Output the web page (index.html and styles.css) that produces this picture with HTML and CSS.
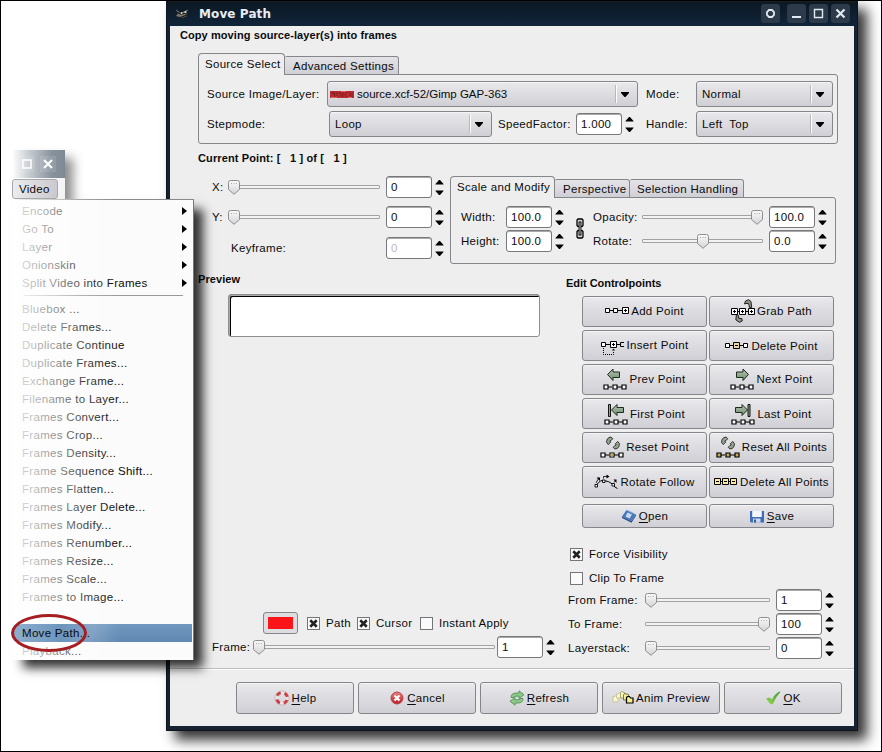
FILE: index.html
```html
<!DOCTYPE html>
<html lang="en">
<head>
<meta charset="utf-8">
<title>Move Path</title>
<link rel="stylesheet" href="styles.css">
</head>
<body>
<svg class="defs" width="0" height="0" aria-hidden="true">
  <defs>
    <linearGradient id="gArrow" x1="0" y1="0" x2="0" y2="1"><stop offset="0" stop-color="#b4c4b0"/><stop offset="1" stop-color="#6f8a70"/></linearGradient>
    <linearGradient id="gThumb" x1="0" y1="0" x2="0" y2="1"><stop offset="0" stop-color="#fafafa"/><stop offset="1" stop-color="#d4d4d6"/></linearGradient>
    <linearGradient id="gRed" x1="0" y1="0" x2="0" y2="1"><stop offset="0" stop-color="#ee7d7d"/><stop offset="1" stop-color="#bb1e26"/></linearGradient>
    <linearGradient id="gGreen" x1="0" y1="1" x2="1" y2="0"><stop offset="0" stop-color="#9fd75c"/><stop offset="1" stop-color="#3c9a22"/></linearGradient>
    <symbol id="thumb" viewBox="0 0 12 15"><path d="M2.500.5h7q2 0 2 2v7L6 14.300.5 9.500v-7q0-2 2-2z" fill="url(#gThumb)" stroke="#8e8e92"/><path d="M3 3.500h1M5.500 3.500h1M8 3.500h1" stroke="#aaa"/></symbol>
    <symbol id="spin" viewBox="0 0 9 15"><path d="M4 0h1l3.500 4v.5H.5V4zM4 15h1l3.500-4v-.5H.5v.5z" fill="#000"/></symbol>
    <symbol id="down" viewBox="0 0 8 5"><path d="M0 0h8v1L4.500 5h-1L0 1z" fill="#000"/></symbol>
    <symbol id="chain" viewBox="0 0 8 21"><path d="M1 2l1-1h4l1 1v5.500l-1 1H2l-1-1zM1 13.500l1-1h4l1 1V19l-1 1H2l-1-1z" fill="#d5d5d5" stroke="#000" stroke-width="1.300"/><path d="M4 3.500v14" stroke="#000" stroke-width="2.800"/><path d="M4 4.500v12" stroke="#ccc"/></symbol>
    <symbol id="check" viewBox="0 0 14 14"><path d="M3.500 3.500l7 7M10.500 3.500l-7 7" stroke="#222" stroke-width="2.800"/></symbol>
    <symbol id="row3" viewBox="0 0 24 6"><path d="M5 3h4M14 3h5" stroke="#000"/><path d="M1 1h4v4H1zM10 1h4v4h-4zM19 1h4v4h-4z" fill="#fff" stroke="#000" stroke-width="1.200"/></symbol>
    <symbol id="row3y" viewBox="0 0 24 6"><path d="M5 3h4M14 3h5" stroke="#000"/><path d="M1 1h4v4H1zM10 1h4v4h-4zM19 1h4v4h-4z" fill="#c2ab5e" stroke="#000" stroke-width="1.200"/></symbol>
    <symbol id="i-add" viewBox="0 0 24 24"><path d="M5 11.500h4M13 11.500h5" stroke="#000"/><path d="M.5 9.500h4v4h-4zM8.500 9.500h4v4h-4zM17.500 8.500h6v6h-6z" fill="#fff" stroke="#000"/><path d="M19 11.500h3M20.500 10v3" stroke="#000"/></symbol>
    <symbol id="i-grab" viewBox="0 0 24 24"><path d="M6 12.500h3M15 12.500h3" stroke="#000"/><path d="M13.500 5l1-3 3-1.300 2.500 1.800.7 6-2 .3L17.500 4.500 15 4.500zM5.500 15l1.800 1.300.5 3 3 .2.500 2.500-3 1.300-3.500-2.500z" fill="#8a9484" stroke="#111" stroke-width=".9"/><path d="M.5 9.500h6v6h-6zM8.500 9.500h6v6h-6zM17.500 9.500h6v6h-6z" fill="#fff" stroke="#000"/><path d="M2 12.500h3M3.500 11v3M10 12.500h3M11.500 11v3M19 12.500h3M20.500 11v3" stroke="#000"/></symbol>
    <symbol id="i-insert" viewBox="0 0 24 24"><path d="M5 11.500h4M15 11.500h4" stroke="#000"/><path d="M.5 9.500h4v4h-4zM9.500 8.500h6v6h-6z" fill="#fff" stroke="#000"/><path d="M23 9.500h-3.500v4H23" fill="none" stroke="#000"/><path d="M11 11.500h3M12.500 10v3" stroke="#000"/><path d="M2.500 15v6.500h10V18" fill="none" stroke="#000" stroke-dasharray="1 1"/><path d="M11 17.500l1.500-2 1.500 2z"/></symbol>
    <symbol id="i-delete" viewBox="0 0 24 24"><path d="M5 11.500h4M15 11.500h4" stroke="#000"/><path d="M.5 9.500h4v4h-4zM18.500 9.500h4v4h-4z" fill="#fff" stroke="#000"/><path d="M8.500 8.500h6v6h-6z" fill="#e8da9c" stroke="#000"/><path d="M10 11.500h3" stroke="#000"/></symbol>
    <symbol id="i-prev" viewBox="0 0 24 24"><path d="M4.500 7.500L10 2v3h6.500v5.500H10v3z" fill="url(#gArrow)" stroke="#1d2b1d"/><use href="#row3" x="0" y="17" width="24" height="6"/></symbol>
    <symbol id="i-next" viewBox="0 0 24 24"><path d="M18.500 7.500L13 2v3H6.500v5.500H13v3z" fill="url(#gArrow)" stroke="#1d2b1d"/><use href="#row3" x="0" y="17" width="24" height="6"/></symbol>
    <symbol id="i-first" viewBox="0 0 24 24"><path d="M7.500 8L13 2.500v3h6.500v5H13v3z" fill="url(#gArrow)" stroke="#1d2b1d"/><path d="M4.500 2.500h2v12h-2z" fill="#91a58f" stroke="#111"/><use href="#row3" x="0" y="17" width="24" height="6"/></symbol>
    <symbol id="i-last" viewBox="0 0 24 24"><path d="M16.500 8L11 2.500v3H4.500v5H11v3z" fill="url(#gArrow)" stroke="#1d2b1d"/><path d="M17 2.500h2v12h-2z" fill="#91a58f" stroke="#111"/><use href="#row3" x="0" y="17" width="24" height="6"/></symbol>
    <symbol id="recycle" viewBox="0 0 14 14"><path d="M.6 6.500Q.4 1.500 5 1l1.800 1.700L5 4.600 3.800 5l.8 1.300L2.300 8.600z" fill="#93a58f" stroke="#111" stroke-width=".8"/><path d="M13.400 7.500q.2 5-4.400 5.500L7.200 11.300 9 9.400l1.200-.4-.8-1.300 2.300-2.300z" fill="#93a58f" stroke="#111" stroke-width=".8"/></symbol>
    <symbol id="i-reset" viewBox="0 0 24 24"><use href="#recycle" x="6" y="1" width="14" height="14"/><use href="#row3" x="0" y="17" width="24" height="6"/><path d="M10.600 18.600h2.800v2.800h-2.800z" fill="#c2ab5e"/></symbol>
    <symbol id="i-resetall" viewBox="0 0 24 24"><use href="#recycle" x="5" y="1" width="14" height="14"/><use href="#row3y" x="0" y="17" width="24" height="6"/></symbol>
    <symbol id="i-rotate" viewBox="0 0 24 24"><path d="M2.500 15q4-5.500 7.500-4.500 5 .5 9 4 1.500 3 4.500 4" fill="none" stroke="#000"/><path d="M1 14.500h2.500V17H1zM8.500 10H11v2.500H8.500zM18 13.500h2.500V16H18z" fill="#fff" stroke="#000" stroke-width=".9"/><path d="M2 13L4.500 8.500M9.500 8.500V6.500h4M20 12.500l1.500-2" fill="none" stroke="#000" stroke-width=".8"/><path d="M2.500 7.500h3.500V11zM12.500 4.500l3 2-3 2zM19.500 9.500h3V13z" fill="#000"/></symbol>
    <symbol id="i-delall" viewBox="0 0 24 24"><path d="M.5 8.500h6v6h-6zM8.500 8.500h6v6h-6zM16.500 8.500h6v6h-6z" fill="#ffe7a0" stroke="#000"/><path d="M2 11.500h3M10 11.500h3M18 11.500h3M6.500 11.500h2M14.500 11.500h2" stroke="#000"/></symbol>
    <symbol id="i-open" viewBox="0 0 16 16"><path d="M5.500 2L15 6.500 10.500 13 1 8.500z" fill="#4a78bd"/><path d="M1 8.500l9.500 4.500L15 6.500v1.300l-4.500 7L1 10z" fill="#27518f"/><path d="M6.500 4.500l4.500 2-2.500 4-4-2z" fill="#c8daf2"/><path d="M7.500 3l4.500 2" stroke="#89aee2"/></symbol>
    <symbol id="i-save" viewBox="0 0 16 16"><path d="M1 3h14v11.500H2L1 13.500z" fill="#3f6cb4"/><path d="M3.200 3h9.600v6H3.200z" fill="#f2f6fc"/><path d="M4 10.500h7.500v4H4z" fill="#c9d8ee"/><path d="M5 11.500h2v3H5z" fill="#3d5d8c"/></symbol>
    <symbol id="i-help" viewBox="0 0 16 16"><circle cx="8" cy="8" r="5.500" fill="none" stroke="#ebe4e4" stroke-width="3"/><circle cx="8" cy="8" r="5.500" fill="none" stroke="#cb3f47" stroke-width="3" stroke-dasharray="4.600 4.040" stroke-dashoffset="-2"/><circle cx="8" cy="8" r="7.100" fill="none" stroke="#c8a0a0" stroke-width=".6"/></symbol>
    <symbol id="i-cancel" viewBox="0 0 16 16"><circle cx="8" cy="8" r="6" fill="url(#gRed)" stroke="#b3434a"/><path d="M5.500 5.500l5 5M10.500 5.500l-5 5" stroke="#fff" stroke-width="2.200"/></symbol>
    <symbol id="i-refresh" viewBox="0 0 16 16"><path d="M2 7.500q0-4.500 5-4.500h3V.8l5 4-5 3.700V6.200H7q-2 0-2 1.300z" fill="#8cc887" stroke="#478c49" stroke-width=".8"/><path d="M14 8.500q0 4.500-5 4.500H6v2.200l-5-4 5-3.700v2.300h3q2 0 2-1.300z" fill="#8cc887" stroke="#478c49" stroke-width=".8"/></symbol>
    <symbol id="i-anim" viewBox="0 0 22 16"><g fill="#fbf8d0" stroke="#c9c69a"><path d="M1 6.500h2l1-1.500 2 1.500V12H1z"/><path d="M4.500 4h2l1-1.500 2 1V8h-5z"/></g><path d="M8.500 2.500l1-1 3 1V8h-4z" fill="#f8f5b8" stroke="#a5a26e"/><path d="M11.500 5l1-1.500 4 1V10h-5z" fill="#f3ee9a" stroke="#77744a"/><path d="M14.500 7.500l1-1h2l1 1.500h2.500V13h-6.500z" fill="#f4ef8b" stroke="#000" stroke-width="1.200"/></symbol>
    <symbol id="i-ok" viewBox="0 0 16 16"><path d="M1 8.500l3.500-1L7 9.500Q9 4.500 14.500 1.500l.8.500Q11 6.500 8 13.800q-1.500 1-3 0z" fill="url(#gGreen)"/></symbol>
    <symbol id="wilber" viewBox="0 0 16 12"><path d="M1 1l5 4 4-2 4-2-2 4 1 3-5 2-4-1-3-1 2-2z" fill="#7e776c"/><path d="M2 4l4 2 6-1M5 10l8-3" stroke="#1c1c1c" stroke-width="1.300" fill="none"/><circle cx="7" cy="5" r="1" fill="#eee"/><circle cx="11" cy="4" r="1" fill="#ddd"/></symbol>
    <symbol id="thumbnail" viewBox="0 0 24 9"><path d="M0 1h24v7H0z" fill="#bb2a2e"/><path d="M1 2l2 2 1-2 1 5M7 2v4M9 3h2v4M13 2v5M16 2l-1 3 2 2M20 2v4M22 3v4" stroke="#7a2322" fill="none"/><path d="M1 7.500h6M11 1.500h5M18 7.500h4" stroke="#e06663"/></symbol>
  </defs>
</svg>

<main class="desktop">
  <section class="window">
    <header class="titlebar">
      <svg class="wilber"><use href="#wilber"/></svg>
      <h1>Move Path</h1>
      <span class="winbtn shade"><svg viewBox="0 0 19 19"><path d="M8 6h3l2 2v3l-2 2H8l-2-2V8z" fill="none" stroke="#dfe9f2" stroke-width="1.800"/></svg></span>
      <span class="winbtn"><svg viewBox="0 0 19 19"><path d="M5 13h9" stroke="#dfe9f2" stroke-width="2"/></svg></span>
      <span class="winbtn"><svg viewBox="0 0 19 19"><path d="M5.500 5.500h8v8h-8z" fill="none" stroke="#dfe9f2" stroke-width="1.400"/></svg></span>
      <span class="winbtn"><svg viewBox="0 0 19 19"><path d="M5.500 5.500l8 8M13.500 5.500l-8 8" stroke="#dfe9f2" stroke-width="2.200"/></svg></span>
    </header>
    <div class="body">
      <h2 class="headline">Copy moving source-layer(s) into frames</h2>

      <div class="notebook source">
        <div class="tabs"><span class="tab active src">Source Select</span><span class="tab adv">Advanced Settings</span></div>
        <div class="panel">
          <div class="line">
            <label class="l-src">Source Image/Layer:</label>
            <div class="combo c-src"><svg class="thumbnail"><use href="#thumbnail"/></svg><span class="grow tight">source.xcf-52/Gimp GAP-363</span><i></i><svg class="down"><use href="#down"/></svg></div>
            <label class="l-mode">Mode:</label>
            <div class="combo c-mode"><span class="grow">Normal</span><i></i><svg class="down"><use href="#down"/></svg></div>
          </div>
          <div class="line">
            <label class="l-step">Stepmode:</label>
            <div class="combo c-step"><span class="grow">Loop</span><i></i><svg class="down"><use href="#down"/></svg></div>
            <label class="l-speed">SpeedFactor:</label>
            <span class="entry">1.000</span><svg class="spin"><use href="#spin"/></svg>
            <label class="l-handle">Handle:</label>
            <div class="combo c-mode"><span class="grow">Left&nbsp; Top</span><i></i><svg class="down"><use href="#down"/></svg></div>
          </div>
        </div>
      </div>

      <div class="middle">
        <div class="point">
          <h2>Current Point: [ &nbsp; 1 ] of [ &nbsp; 1 ]</h2>
          <div class="prow"><label>X:</label><div class="slider"><svg class="thumb"><use href="#thumb"/></svg></div><span class="entry">0</span><svg class="spin"><use href="#spin"/></svg></div>
          <div class="prow"><label>Y:</label><div class="slider"><svg class="thumb"><use href="#thumb"/></svg></div><span class="entry">0</span><svg class="spin"><use href="#spin"/></svg></div>
          <div class="prow key"><label>Keyframe:</label><span class="entry off">0</span><svg class="spin"><use href="#spin"/></svg></div>
        </div>
        <div class="notebook modify">
          <div class="tabs"><span class="tab active scale">Scale and Modify</span><span class="tab persp">Perspective</span><span class="tab sel">Selection Handling</span></div>
          <div class="panel mod">
            <div class="col size">
              <div class="mrow"><label>Width:</label><span class="entry">100.0</span><svg class="spin"><use href="#spin"/></svg></div>
              <div class="mrow"><label>Height:</label><span class="entry">100.0</span><svg class="spin"><use href="#spin"/></svg></div>
            </div>
            <svg class="chain"><use href="#chain"/></svg>
            <div class="col opac">
              <div class="mrow"><label>Opacity:</label><div class="slider end"><svg class="thumb"><use href="#thumb"/></svg></div><span class="entry">100.0</span><svg class="spin"><use href="#spin"/></svg></div>
              <div class="mrow"><label>Rotate:</label><div class="slider mid"><svg class="thumb"><use href="#thumb"/></svg></div><span class="entry">0.0</span><svg class="spin"><use href="#spin"/></svg></div>
            </div>
          </div>
        </div>
      </div>

      <div class="lower">
        <div class="preview">
          <h2>Preview</h2>
          <div class="canvas"></div>
          <div class="options">
            <span class="swatch"><b></b></span>
            <span class="box"><svg><use href="#check"/></svg></span><label class="o-path">Path</label>
            <span class="box"><svg><use href="#check"/></svg></span><label class="o-cursor">Cursor</label>
            <span class="box"></span><label>Instant Apply</label>
          </div>
          <div class="framerow"><label>Frame:</label><div class="slider"><svg class="thumb"><use href="#thumb"/></svg></div><span class="entry">1</span><svg class="spin"><use href="#spin"/></svg></div>
        </div>
        <div class="edit">
          <h2>Edit Controlpoints</h2>
          <div class="buttons">
            <span class="btn"><svg><use href="#i-add"/></svg>Add Point</span>
            <span class="btn"><svg><use href="#i-grab"/></svg>Grab Path</span>
            <span class="btn"><svg><use href="#i-insert"/></svg>Insert Point</span>
            <span class="btn low"><svg><use href="#i-delete"/></svg>Delete Point</span>
            <span class="btn"><svg><use href="#i-prev"/></svg>Prev Point</span>
            <span class="btn"><svg><use href="#i-next"/></svg>Next Point</span>
            <span class="btn low"><svg><use href="#i-first"/></svg>First Point</span>
            <span class="btn low"><svg><use href="#i-last"/></svg>Last Point</span>
            <span class="btn"><svg><use href="#i-reset"/></svg>Reset Point</span>
            <span class="btn"><svg><use href="#i-resetall"/></svg>Reset All Points</span>
            <span class="btn low"><svg><use href="#i-rotate"/></svg>Rotate Follow</span>
            <span class="btn low"><svg><use href="#i-delall"/></svg>Delete All Points</span>
          </div>
          <div class="buttons files">
            <span class="btn small"><svg><use href="#i-open"/></svg><span><u>O</u>pen</span></span>
            <span class="btn small"><svg><use href="#i-save"/></svg><span><u>S</u>ave</span></span>
          </div>
          <div class="checkrow force"><span class="box"><svg><use href="#check"/></svg></span><label>Force Visibility</label></div>
          <div class="checkrow clip"><span class="box"></span><label>Clip To Frame</label></div>
          <div class="mrow"><label>From Frame:</label><div class="slider"><svg class="thumb"><use href="#thumb"/></svg></div><span class="entry">1</span><svg class="spin"><use href="#spin"/></svg></div>
          <div class="mrow"><label>To Frame:</label><div class="slider end"><svg class="thumb"><use href="#thumb"/></svg></div><span class="entry">100</span><svg class="spin"><use href="#spin"/></svg></div>
          <div class="mrow"><label>Layerstack:</label><div class="slider"><svg class="thumb"><use href="#thumb"/></svg></div><span class="entry">0</span><svg class="spin"><use href="#spin"/></svg></div>
        </div>
      </div>

      <footer class="actions">
        <span class="btn small"><svg><use href="#i-help"/></svg><span><u>H</u>elp</span></span>
        <span class="btn small"><svg><use href="#i-cancel"/></svg><span><u>C</u>ancel</span></span>
        <span class="btn small"><svg><use href="#i-refresh"/></svg><span><u>R</u>efresh</span></span>
        <span class="btn small anim"><svg><use href="#i-anim"/></svg><span>Anim Preview</span></span>
        <span class="btn small"><svg><use href="#i-ok"/></svg><span><u>O</u>K</span></span>
      </footer>
    </div>
  </section>

  <section class="host">
    <div class="hosttitle">
      <svg viewBox="0 0 16 16"><path d="M4 4h8v8H4z" fill="none" stroke="#fff" stroke-width="1.500"/></svg>
      <svg viewBox="0 0 16 16"><path d="M4 4l8 8M12 4l-8 8" stroke="#fff" stroke-width="2"/></svg>
    </div>
    <div class="menubar"><span>Video</span></div>
  </section>

  <nav class="menu">
    <ul>
      <li class="sub">Encode</li><li class="sub">Go To</li><li class="sub">Layer</li><li class="sub">Onionskin</li><li class="sub">Split Video into Frames</li>
      <li class="rule"></li>
      <li>Bluebox ...</li><li>Delete Frames...</li><li>Duplicate Continue</li><li>Duplicate Frames...</li><li>Exchange Frame...</li><li>Filename to Layer...</li><li>Frames Convert...</li><li>Frames Crop...</li><li>Frames Density...</li><li>Frame Sequence Shift...</li><li>Frames Flatten...</li><li>Frames Layer Delete...</li><li>Frames Modify...</li><li>Frames Renumber...</li><li>Frames Resize...</li><li>Frames Scale...</li><li>Frames to Image...</li><li></li><li class="hot"></li><li>Playback...</li>
    </ul>
    <div class="fade"></div>
    <div class="lit">Move Path...</div>
    <div class="ring"></div>
  </nav>
</main>
</body>
</html>
```
FILE: styles.css
```css
* { box-sizing: border-box; }
body { margin: 0; background: #fff; font: 11.5px/16px "Liberation Sans", Arial, sans-serif; letter-spacing: .3px; color: #0b0b0b; }
.defs { position: absolute; }
svg { display: block; flex: none; }
h1, h2, ul { margin: 0; padding: 0; }
h2 { font-size: 11px; line-height: 16px; letter-spacing: .08px; }
label, .btn, .tab, .grow, li { white-space: nowrap; }

.desktop { position: relative; width: 882px; height: 752px; overflow: hidden; border: 1px solid #000; }

.window { position: absolute; left: 165px; top: -1px; width: 692px; height: 731px; background: #162231; border: solid #0d141d; border-width: 0 1px 1px; padding: 0 3px 3px; box-shadow: 9px 9px 12px 0 rgba(0,0,0,.8); }
.titlebar { height: 26px; margin: 0 -3px; padding: 1px 7px 0 8px; display: flex; align-items: center; background: linear-gradient(#231f22 0, #0c1924 3px, #10243a 100%); }
.wilber { width: 15px; height: 12px; }
.titlebar h1 { flex: 1; margin-left: 9px; font: bold 12px/16px "DejaVu Sans", sans-serif; letter-spacing: .1px; color: #e6edf3; }
.winbtn { width: 19px; height: 19px; margin-left: 3px; border-radius: 3px; background: #2c3a49; }
.winbtn.shade { margin-right: 4px; }
.winbtn svg { width: 19px; height: 19px; }

.body { height: 700px; background: #eee; display: flex; flex-direction: column; }
.headline { height: 27px; padding: 1px 0 0 10px; }

.notebook.source { margin-left: 28px; width: 640px; height: 90px; }
.tabs { display: flex; align-items: flex-end; height: 22px; margin-bottom: -1px; }
.tab { height: 19px; border: 1px solid #85868a; border-left: 0; border-radius: 2px 3px 0 0; background: linear-gradient(#e4e4e7, #cfcfd6); line-height: 18px; padding-left: 8px; }
.tab.active { position: relative; height: 22px; border-left: 1px solid #85868a; border-bottom: 0; border-radius: 4px 4px 0 0; background: #eee; line-height: 20px; padding-left: 6px; }
.src { width: 87px; }
.adv { width: 114px; }
.scale { width: 105px; }
.persp { width: 75px; }
.sel { width: 114px; padding-left: 7px; }
.panel { border: 1px solid #85868a; border-radius: 0 3px 3px 3px; height: 70px; padding: 4px 0 0 8px; }
.line { display: flex; align-items: center; height: 30px; }
.line > * { flex: none; }
.combo { display: flex; align-items: center; height: 26px; border: 1px solid #85868a; border-radius: 3px; background: linear-gradient(#e9e9ec, #cfcfd5); padding: 0 8px 0 5px; box-shadow: inset 0 1px 0 #f5f5f7; }
.grow { flex: 1; }
.tight { letter-spacing: 0; }
.combo i { width: 2px; height: 18px; border-left: 1px solid #b7b7bc; background: #fff; margin-right: 4px; }
.down { width: 8px; height: 5px; }
.thumbnail { width: 24px; height: 9px; margin: 0 3px 0 -3px; }
.l-src { width: 120px; }
.l-mode, .l-handle { width: 50px; }
.l-step { width: 122px; }
.l-speed { width: 78px; }
.c-src { width: 311px; margin-right: 8px; }
.c-mode { width: 137px; }
.c-step { width: 163px; margin-right: 6px; }
.l-handle { margin-left: 12px; }
.entry { width: 46px; height: 22px; border: 1px solid #77787c; border-radius: 3px; background: #fff; box-shadow: inset 0 1px 0 #aaa; line-height: 21px; padding-left: 4px; flex: none; }
.entry.off { color: #bbb; }
.spin { width: 9px; height: 15px; margin-left: 3px; }

.middle { display: flex; height: 125px; padding-left: 28px; }
.point { width: 252px; padding-top: 7px; }
.point h2 { margin-bottom: 6px; letter-spacing: .12px; }
.prow { display: flex; align-items: center; height: 30px; padding-left: 14px; }
.prow label { width: 16px; }
.prow .slider { width: 152px; margin-right: 6px; }
.key { margin-top: 1px; padding-left: 33px; }
.key label { width: 155px; }
.slider { position: relative; height: 4px; border: 1px solid #a2a2a5; border-radius: 1px; background: #f2f2f2; flex: none; }
.thumb { position: absolute; left: -1px; top: -6px; width: 12px; height: 15px; }
.end .thumb { left: auto; right: -1px; }
.mid .thumb { left: 54px; }

.modify { width: 386px; margin-top: 33px; }
.panel.mod { height: 67px; display: flex; padding: 7px 0 0 10px; }
.mrow { display: flex; align-items: center; height: 24px; }
.size { width: 115px; }
.size label { width: 45px; }
.chain { width: 8px; height: 21px; margin: 13px 9px 0 0; }
.opac label { width: 49px; }
.opac .slider { width: 121px; margin-right: 6px; }

.lower { display: flex; height: 400px; padding-left: 28px; }
.preview { width: 368px; padding-top: 3px; display: flex; flex-direction: column; }
.canvas { width: 312px; height: 43px; margin: 7px 0 auto 30px; background: #fff; border: 1px solid #8e8e90; border-radius: 3px; box-shadow: inset 1px 1px 0 #aaa, inset 2px 2px 0 #000; }
.options { display: flex; align-items: center; height: 22px; margin-bottom: 1px; padding-left: 65px; }
.swatch { width: 35px; height: 22px; border: 1px solid #85868a; border-radius: 3px; background: #dcdce1; padding: 4px; margin-right: 9px; }
.swatch b { display: block; height: 12px; background: #fb1518; }
.box { width: 13px; height: 13px; border: 1px solid #747579; background: #fafafa; flex: none; }
.box svg { width: 13px; height: 13px; margin: -1px; }
.box + label { margin-left: 6px; }
.o-path { width: 31px; }
.o-cursor { width: 44px; }
.framerow { display: flex; align-items: center; height: 24px; padding-left: 14px; margin-bottom: 9px; }
.framerow label { width: 41px; }
.framerow .slider { width: 242px; margin-right: 2px; }

.edit { padding-top: 7px; }
.edit h2 { letter-spacing: -.03px; }
.buttons { display: grid; grid-template-columns: 125px 125px; grid-template-rows: repeat(5, 31px) 32px; gap: 3px 2px; margin: 5px 0 0 16px; }
.btn { display: flex; align-items: center; justify-content: center; border: 1px solid #85868a; border-radius: 3px; background: linear-gradient(#e9e9ec, #cfcfd5); box-shadow: inset 0 1px 0 #f4f4f6; gap: 2px; padding-bottom: 1px; }
.btn.low, .btn.small { padding-bottom: 0; }
.btn svg { width: 24px; height: 24px; }
.btn.small svg { width: 16px; height: 16px; }
.btn.anim svg { width: 22px; height: 16px; }
u { text-underline-offset: 2px; }
.files { grid-template-rows: 24px; margin-top: 6px; }
.checkrow { display: flex; align-items: center; padding-left: 4px; }
.force { margin-top: 14px; height: 24px; }
.clip { margin-top: 2px; height: 20px; }
.edit .mrow { padding-left: 2px; }
.edit .mrow label { width: 77px; }
.edit .slider { width: 125px; margin-right: 6px; }

.actions { flex: 1; display: flex; gap: 4px; padding: 13px 0 0 66px; border-top: 1px solid #bdbdbf; box-shadow: inset 0 1px 0 #fff; }
.actions .btn { width: 118px; height: 32px; }

.host { position: absolute; left: 11px; top: 149px; width: 53px; height: 50px; background: linear-gradient(90deg, #fff, #f4f4f4); box-shadow: 9px 7px 10px -1px rgba(0,0,0,.45); }
.hosttitle { height: 28px; display: flex; align-items: center; gap: 5px; padding-left: 7px; background: linear-gradient(90deg, #fff 0, #c9ced3 30%, #89939d 75%, #7e8993 100%); }
.hosttitle svg { width: 16px; height: 16px; background: rgba(255,255,255,.1); }
.menubar span { display: block; width: 46px; height: 20px; margin-top: 1px; padding-left: 6px; border: 1px solid #a9a9ad; border-radius: 3px; background: linear-gradient(90deg, #ececee, #c9c9cf); line-height: 19px; }

.menu { position: absolute; left: 11px; top: 198px; width: 182px; height: 461px; background: #fbfbfb; border-top: 1px solid #8a8a8c; border-right: 1px solid #77777a; box-shadow: 10px 9px 10px -1px rgba(0,0,0,.8); }
.menu ul { list-style: none; padding-top: 2px; height: 460px; overflow: hidden; }
.menu li { height: 18px; line-height: 19px; padding-left: 10px; }
.menu li.sub { position: relative; }
.menu li.sub::after { content: ""; position: absolute; right: 6px; top: 5px; border: solid transparent; border-width: 4px 0 4px 5px; border-left-color: #000; }
.menu li.rule { height: 8px; padding: 0; margin: 3px 10px -3px 12px; border-top: 1px solid #999; }
.menu li.hot { background: linear-gradient(#7198bf, #6088b2); margin-right: 1px; }
.fade { position: absolute; left: 0; top: -1px; width: 120px; height: 461px; background: linear-gradient(90deg, #fff 0, rgba(255,255,255,.8) 12px, rgba(255,255,255,.55) 42px, rgba(255,255,255,.22) 72px, rgba(255,255,255,0) 108px); }
.ring { position: absolute; left: -1px; top: 414px; width: 76px; height: 38px; border: 3px solid #a51e22; border-radius: 50%; }
.lit { position: absolute; left: 1px; top: 424px; width: 82px; height: 18px; line-height: 19px; padding-left: 9px; border-radius: 9px 0 0 9px; background: linear-gradient(90deg, #8fb0cf, #6c94bc 60%, #7d9fc2 82%, rgba(125,159,194,0)); white-space: nowrap; }
```
